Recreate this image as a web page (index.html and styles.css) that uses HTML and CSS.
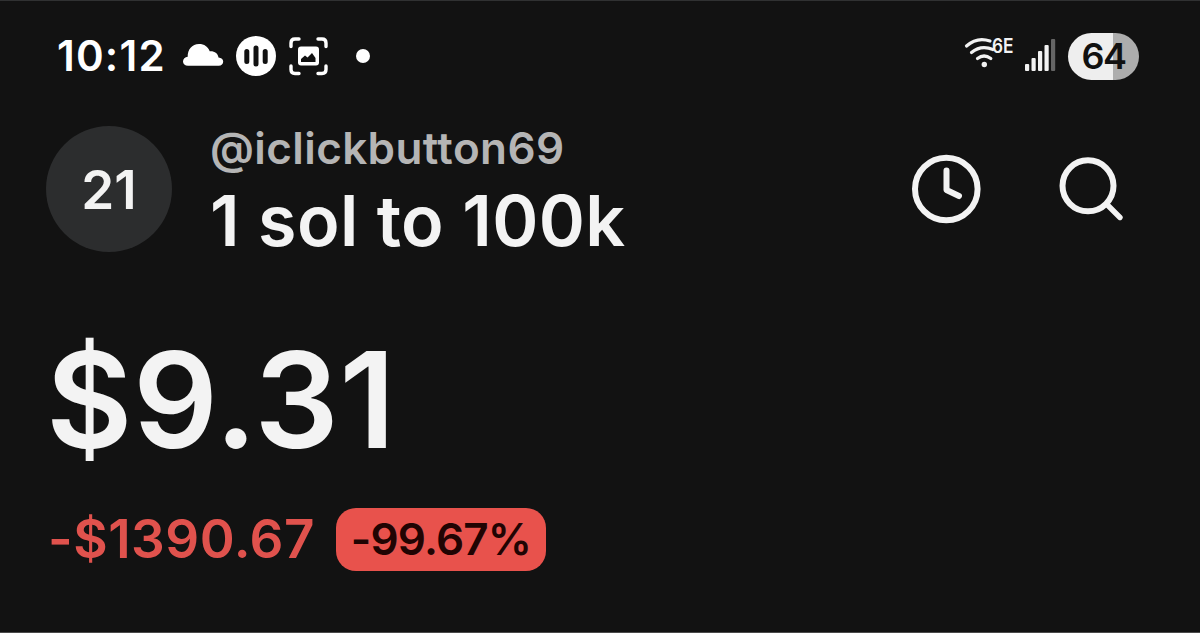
FILE: index.html
```html
<!DOCTYPE html>
<html lang="en">
<head>
<meta charset="utf-8">
<title>Portfolio</title>
<link rel="stylesheet" href="styles.css">
</head>
<body>
<main class="screen">
  <div class="status">
    <span class="time">10:12</span>
    <svg class="notifs" width="190" height="48" viewBox="180 32 190 48" fill="#fff">
      <path d="M188 65.800C185 65.800 183 64 183 61.500c0-2.600 2-4.300 4.700-4.700C187.500 49.500 192 44 199 44c5.300 0 9 2.700 10.700 7.200 5-.3 8.300 2.200 8.800 6.300 2.900.3 4.700 1.800 4.700 4.100 0 2.600-1.800 4.200-4.500 4.200z"/>
      <circle cx="256" cy="56" r="20"/>
      <g stroke="#111" stroke-width="5" stroke-linecap="round"><path d="M246.800 51.500v10M256 48v16M265.200 51.500v10"/></g>
      <g fill="none" stroke="#fff" stroke-width="3.400" stroke-linecap="round"><path d="M291 46.500V43q0-4 4-4h4M318 39h4q4 0 4 4v3.500M326 66v3.500q0 4-4 4h-4M299 73.500h-4q-4 0-4-4V66"/></g>
      <rect x="298" y="46.500" width="21" height="19" rx="3"/>
      <path fill="#111" d="M301 62v-3l4-3.500 2.500 2 4.500-4.500 3.500 5V62z"/>
      <circle cx="363" cy="56" r="7"/>
    </svg>
    <svg class="signals" width="94" height="48" viewBox="964 32 94 48">
      <g fill="none" stroke="#f2f2f2" stroke-width="3.200" stroke-linecap="round"><path d="M966.500 46Q977 36.500 990 41M971.500 52.500Q981 44.500 993 49.500M977.500 58.500Q984 53.500 990.800 58.500"/></g>
      <circle cx="984.300" cy="64.500" r="2.700" fill="#f2f2f2"/>
      <text class="band" x="992" y="53.300" textLength="21.500" lengthAdjust="spacingAndGlyphs">6E</text>
      <g fill="#f2f2f2"><rect x="1025" y="64" width="4.200" height="7" rx="1"/><rect x="1031.500" y="58" width="4.200" height="13" rx="1"/><rect x="1038" y="51" width="4.200" height="20" rx="1"/><rect x="1044.500" y="45" width="4.200" height="26" rx="1"/></g>
      <rect x="1051" y="39" width="4.200" height="32" rx="1" fill="#656565"/>
    </svg>
    <span class="battery">64</span>
  </div>
  <header class="header">
    <div class="avatar">21</div>
    <div class="names">
      <div class="handle">@iclickbutton69</div>
      <h1 class="title">1 sol to 100k</h1>
    </div>
    <svg class="actions" width="220" height="80" viewBox="908 149 220 80" fill="none" stroke="#f3f3f3" stroke-width="6" stroke-linecap="round" stroke-linejoin="round">
      <circle cx="946.300" cy="189" r="31.300"/>
      <path d="M946.500 170.500V190l12.500 6"/>
      <circle cx="1088" cy="185.800" r="25.500"/>
      <path stroke-width="5.400" d="M1107.500 205l12.500 12.500"/>
    </svg>
  </header>
  <div class="balance">$9.31</div>
  <div class="change">
    <span class="loss">-$1390.67</span>
    <span class="percent">-99.67%</span>
  </div>
</main>
</body>
</html>
```
FILE: styles.css
```css
* { box-sizing: border-box; }
body {
  margin: 0;
  background: #121212;
  color: #f3f3f3;
  font-family: Inter, "Liberation Sans", sans-serif;
  font-weight: 600;
}
.screen {
  height: 633px;
  padding: 31px 61px 0 46px;
  border-top: 1px solid #303132;
  border-bottom: 1px solid #4a4a4a;
  overflow: hidden;
  white-space: nowrap;
}
.status { display: flex; height: 48px; align-items: center; }
.time { width: 134px; padding-left: 11px; font-size: 42px; line-height: 50px; letter-spacing: 1.2px; color: #fff; }
.signals { margin-left: auto; }
.band { font-size: 20px; font-weight: 600; fill: #f2f2f2; }
.battery {
  width: 71px;
  height: 47px;
  margin-left: 10px;
  border-radius: 24px;
  background: linear-gradient(90deg, #eee 0 45px, #adadad 45px);
  color: #111;
  font-size: 36px;
  line-height: 46px;
  letter-spacing: -1.5px;
  text-align: center;
}
.header { display: flex; height: 126px; margin-top: 46px; align-items: center; }
.avatar {
  width: 126px;
  height: 126px;
  border-radius: 50%;
  background: #2c2d2e;
  font-size: 53px;
  line-height: 129px;
  text-align: center;
}
.names { margin-left: 38px; height: 126px; }
.handle { font-size: 44px; line-height: 44px; letter-spacing: 0.4px; color: #b5b5b5; }
.title { margin: 16px 0 0; font-size: 70px; line-height: 70px; font-weight: 600; letter-spacing: 0.4px; }
.actions { margin: 0 11px 0 auto; }
.balance { font-size: 133px; line-height: 120px; margin: 88px 0 0; letter-spacing: 0.4px; }
.change { display: flex; height: 63px; margin: 48px 0 0 2px; align-items: center; }
.loss { width: 288px; color: #e0524d; font-size: 53px; line-height: 61px; letter-spacing: 0.5px; }
.percent {
  width: 210px;
  height: 63px;
  border-radius: 20px;
  background: #e8524c;
  color: #210403;
  font-size: 44px;
  line-height: 63px;
  letter-spacing: -0.8px;
  text-align: center;
}
```
